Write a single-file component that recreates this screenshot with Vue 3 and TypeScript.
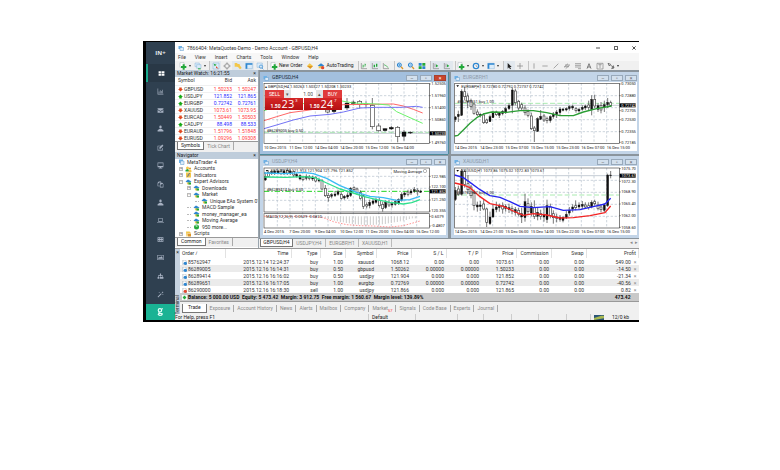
<script setup lang="ts">
type Candle = [number, number, number, number, number, number]
type Line = { color: string; width: number; points: string }
type Chart = {
  id: string
  title: string
  active: boolean
  x: number
  y: number
  left: number
  top: number
  bottom: number
  caption: string
  order: string
  orderY: number
  level: number
  priceY: number
  tag: string
  labels: [number, string][]
  times: string[]
  candles: Candle[]
  lines: Line[]
}

const navIcons: string[] = [
  'M1 2h4v3H1zM6 2h5v3H6zM1 6h4v4H1zM6 6h5v4H6z',
  'M1 1h1v9h9v1H1zM3 6h1v3H3zM5 4h1v5H5zM7 5h1v4H7zM9 3h1v6H9z',
  'M1 2h10v2L6 7 1 4zM1 5l5 3 5-3v5H1z',
  'M4 3a2 2 0 1 1 4 0v1a2 2 0 1 1-4 0zM1 11V9l3-2h4l3 2v2z',
  'M1 3h6v1H2v6h7V7h1v4H1zM9 1l2 2-5 5H4V6z',
  'M1 1h10v8H7v1h2v1H3v-1h2V9H1zM2 2v5h8V2z',
  'M1 3l2-2h4v2h2l2 2v6H5V9H1zM2 4v4h3V5l1-2V2H4v2zM6 6v4h4V5H8v1z',
  'M4 3a2 2 0 1 1 4 0v1a2 2 0 1 1-4 0zM1 11V9l3-2h4l3 2v2z',
  'M2 2h8v6H2zM3 3v4h6V3zM0 9h12v1H0z',
  'M1 2h10v8H1zM2 4v1h2V4zM5 4v1h2V4zM8 4v1h2V4zM2 7v1h2V7zM5 7v1h2V7zM8 7v1h2V7z',
  'M0 2h12v8H0zM1 3v6h10V3zM2 8V7l2-2 1 1 3-2 2 3v1z',
  'M5 1h2v3h3v3h1v3H8V7h1V5H7v2h1v3H5V7h1V5H3v2h1v3H1V7h1V4h3z',
  'M1 10l6-6 1 1-6 6zM8 3l2-2 1 1-2 2zM3 2h2v1H3zM9 6h2v1H9z',
]

const menus = ['File', 'View', 'Insert', 'Charts', 'Tools', 'Window', 'Help']

type Tool = { name: string; icon: string; drop?: boolean; on?: boolean; text?: string }
const toolGroups: Tool[][] = [
  [{ name: 'New chart', icon: 'plus', drop: true }, { name: 'Profiles', icon: 'stack', drop: true }],
  [
    { name: 'Market Watch', icon: 'watch', on: true },
    { name: 'Data Window', icon: 'target' },
    { name: 'Navigator', icon: 'folder', on: true },
    { name: 'Terminal', icon: 'panel', on: true },
    { name: 'Strategy Tester', icon: 'tester' },
  ],
  [
    { name: 'New Order', icon: 'plus', text: 'New Order' },
    { name: 'MetaEditor', icon: 'gem' },
    { name: 'AutoTrading', icon: 'robot', text: 'AutoTrading' },
  ],
  [
    { name: 'Bar Chart', icon: 'bars' },
    { name: 'Candlesticks', icon: 'sticks', on: true },
    { name: 'Line Chart', icon: 'linechart' },
  ],
  [
    { name: 'Zoom In', icon: 'zoomin' },
    { name: 'Zoom Out', icon: 'zoomout' },
    { name: 'Tile Windows', icon: 'tiles' },
  ],
  [
    { name: 'Auto Scroll', icon: 'scroll', on: true },
    { name: 'Chart Shift', icon: 'scroll', on: true },
  ],
  [
    { name: 'Indicators', icon: 'plus', drop: true },
    { name: 'Periods', icon: 'clock', drop: true },
    { name: 'Templates', icon: 'panel', drop: true },
  ],
  [
    { name: 'Cursor', icon: 'cursor', on: true },
    { name: 'Crosshair', icon: 'cross' },
  ],
  [
    { name: 'Vertical Line', icon: 'vline' },
    { name: 'Horizontal Line', icon: 'hline' },
    { name: 'Trendline', icon: 'slash' },
    { name: 'Channel', icon: 'channel' },
    { name: 'Fibonacci', icon: 'fibo' },
    { name: 'Text', icon: 'letter' },
    { name: 'Text Label', icon: 'label' },
    { name: 'Arrows', icon: 'arrows', drop: true },
  ],
]

const quotes: [string, string, string, boolean][] = [
  ['GBPUSD', '1.50233', '1.50247', false],
  ['USDJPY', '121.852', '121.865', true],
  ['EURGBP', '0.72742', '0.72761', true],
  ['XAUUSD', '1073.61', '1073.95', false],
  ['EURCAD', '1.50449', '1.50503', false],
  ['CADJPY', '88.498', '88.533', true],
  ['EURAUD', '1.51796', '1.51848', false],
  ['EURUSD', '1.09296', '1.09308', false],
]

const tree: { text: string; depth: number; kind: string; box: string }[] = [
  { text: 'MetaTrader 4', depth: 0, kind: 'root', box: '' },
  { text: 'Accounts', depth: 1, kind: 'people', box: '+' },
  { text: 'Indicators', depth: 1, kind: 'func', box: '+' },
  { text: 'Expert Advisors', depth: 1, kind: 'hat', box: '−' },
  { text: 'Downloads', depth: 2, kind: 'hat', box: '+' },
  { text: 'Market', depth: 2, kind: 'hat', box: '−' },
  { text: 'Unique EAs System 01', depth: 3, kind: 'hat', box: '' },
  { text: 'MACD Sample', depth: 2, kind: 'hat', box: '' },
  { text: 'money_manager_ea', depth: 2, kind: 'hat', box: '' },
  { text: 'Moving Average', depth: 2, kind: 'hat', box: '' },
  { text: '950 more...', depth: 2, kind: 'globe', box: '' },
  { text: 'Scripts', depth: 1, kind: 'script', box: '+' },
]

const charts: Chart[] = [
  {
    id: 'gbpusd', title: 'GBPUSD,H4', active: true, x: 9, y: 6, left: 12, top: 10, bottom: 190,
    caption: '', order: '#86289005 buy 0.50', orderY: 155, level: 157, priceY: 160, tag: '1.50233',
    labels: [[12, '1.52505'], [47, '1.51960'], [83, '1.51400'], [119, '1.50860'], [187, '1.49760']],
    times: ['10 Dec 2015', '11 Dec 12:00', '14 Dec 04:00', '14 Dec 20:00', '15 Dec 12:00', '16 Dec 04:00'],
    candles: [
      [203, 84, 100, 90, 96, 0], [222, 84, 100, 89, 95, 1], [261, 54, 90, 69, 84, 1], [280, 62, 76, 66, 71, 1],
      [299, 60, 86, 64, 73, 0], [318, 64, 84, 72, 74, 1], [337, 54, 148, 76, 140, 0], [356, 130, 155, 138, 152, 0],
      [375, 144, 154, 146, 152, 1], [394, 138, 150, 142, 147, 1], [413, 138, 187, 142, 170, 0],
      [432, 150, 182, 156, 169, 1], [451, 154, 162, 157, 159, 1],
    ],
    lines: [
      { color: '#f66', width: 3, points: '12,122 50,110 90,98 135,92 250,74 400,72 430,78 460,88 488,99' },
      { color: '#6cf26c', width: 3, points: '12,92 60,76 240,62 280,69 350,72 385,75 410,95 450,113 488,130' },
      { color: '#7373f5', width: 3, points: '12,146 60,132 100,120 150,108 210,103 250,96 300,84 350,82 420,82 470,79 488,82' },
    ],
  },
  {
    id: 'eurgbp', title: 'EURGBP,H1', active: false, x: 12, y: 6, left: 14, top: 10, bottom: 190,
    caption: 'EURGBP,H1  0.72780 0.72792 0.72737 0.72742', order: '#86289651 buy 1.00', orderY: 68, level: 70, priceY: 76, tag: '0.72742',
    labels: [[12, '0.73050'], [47, '0.72880'], [92, '0.72705'], [119, '0.72530'], [155, '0.72355'], [187, '0.72185']],
    times: ['14 Dec 2015', '14 Dec 23:00', '15 Dec 07:00', '15 Dec 15:00', '15 Dec 23:00', '16 Dec 07:00', '16 Dec 15:00'],
    candles: [
      [16, 108, 126, 111, 119, 1], [25, 92, 126, 103, 110, 1], [35, 28, 108, 34, 106, 1], [44, 20, 60, 35, 50, 0],
      [53, 40, 84, 48, 64, 0], [63, 56, 90, 62, 80, 0], [72, 68, 104, 72, 100, 0], [82, 88, 108, 96, 104, 0],
      [91, 100, 112, 103, 107, 1], [101, 100, 132, 105, 128, 0], [110, 116, 132, 120, 128, 0], [120, 104, 126, 110, 125, 1],
      [129, 92, 114, 98, 113, 1], [139, 92, 108, 96, 104, 0], [148, 96, 114, 98, 106, 1], [158, 90, 106, 94, 101, 1],
      [167, 80, 102, 86, 96, 1], [177, 70, 90, 77, 86, 1], [187, 22, 100, 30, 76, 1], [196, 26, 76, 33, 68, 0],
      [206, 60, 92, 64, 84, 0], [215, 68, 92, 74, 84, 0], [225, 76, 106, 84, 98, 0], [234, 88, 112, 94, 106, 0],
      [244, 98, 150, 108, 146, 0], [253, 138, 186, 144, 152, 0], [263, 112, 156, 116, 154, 1], [272, 90, 120, 109, 118, 1],
      [282, 102, 126, 108, 120, 0], [291, 110, 130, 116, 122, 0], [301, 106, 128, 110, 122, 1], [310, 96, 116, 102, 110, 1],
      [320, 90, 114, 96, 104, 1], [330, 82, 108, 87, 98, 1], [339, 84, 94, 87, 91, 1], [349, 82, 94, 86, 90, 1],
      [358, 76, 92, 80, 86, 1], [368, 74, 90, 79, 84, 1], [378, 82, 98, 86, 92, 0], [387, 84, 98, 88, 93, 1],
      [397, 76, 92, 82, 88, 1], [406, 74, 90, 78, 84, 1], [416, 62, 90, 75, 82, 0], [425, 46, 106, 58, 88, 1],
      [434, 44, 84, 58, 78, 0], [444, 70, 96, 77, 88, 1], [453, 66, 100, 76, 90, 0], [463, 62, 96, 74, 82, 1],
      [473, 54, 84, 67, 74, 1], [482, 62, 80, 68, 76, 0],
    ],
    lines: [
      { color: '#2a9d34', width: 4, points: '14,168 24,166 40,150 60,130 80,113 100,102 125,96 170,97 210,92 250,92 290,98 330,107 370,107 400,96 440,86 485,78' },
    ],
  },
  {
    id: 'usdjpy', title: 'USDJPY,H4', active: false, x: 9, y: 33, left: 12, top: 39, bottom: 171,
    caption: 'USDJPY,H4  121.913 121.904 121.796 121.852', order: '#86289414 buy 0.50', orderY: 107, level: 109, priceY: 109, tag: '121.852',
    labels: [[64, '122.985'], [96, '122.100'], [135, '121.250'], [168, '120.355'], [184, '0.6079'], [213, '-0.4807']],
    times: ['4 Dec 2015', '7 Dec 20:00', '9 Dec 04:00', '10 Dec 12:00', '11 Dec 20:00', '15 Dec 04:00', '16 Dec 12:00'],
    candles: [
      [16, 52, 78, 64, 75, 1], [25, 46, 66, 52, 64, 0], [35, 44, 60, 50, 56, 1], [44, 44, 60, 48, 54, 1],
      [54, 44, 58, 48, 54, 1], [63, 42, 60, 49, 55, 0], [72, 44, 60, 48, 54, 1], [82, 40, 60, 46, 54, 0],
      [91, 44, 60, 48, 54, 1], [101, 46, 66, 50, 60, 0], [110, 54, 68, 58, 64, 1], [120, 58, 76, 62, 72, 1],
      [129, 62, 78, 66, 74, 0], [139, 58, 76, 64, 70, 1], [148, 60, 76, 66, 70, 0], [158, 62, 78, 66, 72, 1],
      [167, 64, 82, 68, 78, 0], [177, 68, 82, 73, 78, 1], [186, 72, 106, 77, 102, 0], [196, 90, 126, 100, 122, 0],
      [205, 114, 140, 121, 128, 0], [215, 114, 130, 119, 124, 1], [225, 108, 126, 117, 122, 1], [234, 104, 122, 110, 118, 1],
      [244, 112, 134, 118, 130, 0], [253, 120, 134, 124, 129, 1], [263, 112, 132, 120, 126, 1], [272, 96, 126, 100, 122, 1],
      [282, 94, 108, 98, 104, 0], [291, 98, 120, 102, 112, 0], [301, 106, 134, 112, 130, 0], [310, 118, 162, 122, 154, 0],
      [320, 142, 160, 149, 153, 0], [329, 134, 160, 142, 152, 1], [339, 132, 150, 138, 145, 1], [348, 128, 146, 134, 142, 1],
      [358, 128, 158, 137, 152, 0], [368, 140, 170, 148, 161, 0], [377, 136, 162, 142, 158, 1], [387, 136, 156, 142, 150, 0],
      [396, 140, 158, 146, 150, 1], [406, 134, 152, 140, 148, 1], [416, 130, 150, 134, 146, 1], [425, 112, 140, 118, 136, 1],
      [434, 110, 126, 114, 120, 1], [444, 104, 124, 111, 118, 0], [453, 102, 120, 108, 114, 1], [463, 96, 114, 104, 109, 1],
      [473, 100, 122, 106, 110, 0], [482, 104, 114, 108, 112, 1],
    ],
    lines: [
      { color: '#3bbcf5', width: 4, points: '12,54 80,56 130,52 160,56 200,70 240,92 290,112 330,124 370,128 410,136 450,134 480,124' },
      { color: '#2fe08d', width: 4, points: '12,66 80,67 130,65 165,68 200,84 240,102 280,114 310,124 350,134 390,142 430,147 455,143 480,134' },
    ],
  },
  {
    id: 'xauusd', title: 'XAUUSD,H1', active: false, x: 12, y: 33, left: 14, top: 39, bottom: 219,
    caption: 'XAUUSD,H1  1073.86 1075.02 1072.83 1073.61', order: '#85762947 buy 1.00', orderY: 117, level: 120, priceY: 62, tag: '1073.61',
    labels: [[41, '1075.70'], [79, '1072.30'], [111, '1068.90'], [147, '1065.40'], [182, '1062.00'], [217, '1058.60']],
    times: ['14 Dec 2015', '14 Dec 21:00', '15 Dec 06:00', '15 Dec 14:00', '15 Dec 22:00', '16 Dec 07:00', '16 Dec 15:00'],
    candles: [
      [16, 96, 138, 106, 134, 1], [25, 92, 122, 102, 118, 0], [35, 42, 122, 48, 118, 1], [44, 44, 98, 50, 88, 0],
      [54, 60, 112, 86, 104, 0], [63, 90, 130, 96, 122, 0], [72, 104, 166, 112, 152, 0], [82, 140, 170, 150, 156, 1],
      [91, 138, 168, 150, 155, 1], [101, 132, 166, 147, 162, 0], [110, 158, 216, 162, 202, 0], [120, 170, 210, 186, 206, 1],
      [129, 148, 188, 162, 186, 1], [139, 140, 172, 156, 164, 1], [148, 146, 170, 154, 158, 1], [158, 142, 176, 152, 162, 0],
      [167, 148, 170, 154, 160, 1], [177, 146, 174, 158, 164, 1], [186, 152, 178, 160, 168, 0], [196, 156, 182, 164, 172, 1],
      [206, 158, 184, 166, 178, 0], [215, 158, 204, 176, 186, 1], [225, 116, 200, 140, 188, 1], [234, 130, 180, 146, 170, 0],
      [244, 142, 184, 154, 174, 1], [253, 136, 192, 158, 184, 0], [263, 158, 196, 172, 184, 1], [272, 164, 194, 176, 184, 0],
      [282, 158, 200, 178, 186, 1], [291, 134, 204, 152, 194, 1], [301, 146, 190, 156, 182, 0], [310, 166, 206, 176, 188, 0],
      [320, 176, 202, 186, 190, 0], [330, 180, 200, 188, 193, 1], [339, 184, 202, 188, 196, 1], [349, 168, 192, 178, 188, 1],
      [358, 156, 182, 166, 174, 1], [368, 148, 172, 156, 162, 1], [377, 136, 166, 152, 158, 0], [387, 142, 164, 150, 156, 1],
      [397, 138, 162, 148, 154, 1], [406, 142, 162, 150, 156, 0], [416, 142, 164, 152, 158, 0], [425, 136, 160, 142, 156, 1],
      [434, 134, 152, 140, 146, 0], [444, 140, 166, 150, 160, 0], [453, 148, 172, 156, 164, 0], [463, 144, 172, 150, 166, 1],
      [473, 56, 156, 60, 152, 1], [482, 48, 70, 60, 62, 1],
    ],
    lines: [
      { color: '#2424f0', width: 4, points: '14,60 40,68 60,82 90,104 120,122 150,127 180,140 210,154 250,158 300,155 340,166 390,164 430,155 465,147 482,130' },
      { color: '#f32424', width: 4, points: '14,84 40,90 60,98 90,125 120,146 160,154 190,168 220,181 250,176 290,180 330,189 370,188 420,182 465,173 482,153' },
    ],
  },
]
const tabOrder = [charts[0], charts[2], charts[1], charts[3]]

const columnX = Array.from({ length: 12 }, (_, i) => 52 + i * 38)
const rowY = (c: Chart): number[] => {
  const first = c.y === 6 ? 47 : c.id === 'usdjpy' ? 64 : 76
  return [0, 1, 2, 3].map((i) => first + i * 36).filter((y) => y < c.bottom - 4)
}
const macd = Array.from({ length: 32 }, (_, i) => {
  const x = 187 + i * 9
  return { x, y: 184 + Math.round(4 + 22 * Math.sin((Math.min(i, 30) / 31) * Math.PI)) }
})

const columns = ['Order  ∕', 'Time', 'Type', 'Size', 'Symbol', 'Price', 'S / L', 'T / P', 'Price', 'Commission', 'Swap', 'Profit']
const orders: string[][] = [
  ['85762947', '2015.12.14 12:24:37', 'buy', '1.00', 'xauusd', '1068.12', '0.00', '0.00', '1073.61', '0.00', '0.00', '549.00'],
  ['86289005', '2015.12.16 16:14:31', 'buy', '0.50', 'gbpusd', '1.50262', '0.00000', '0.00000', '1.50233', '0.00', '0.00', '-14.50'],
  ['86289414', '2015.12.16 16:16:02', 'buy', '0.50', 'usdjpy', '121.904', '0.000', '0.000', '121.852', '0.00', '0.00', '-21.34'],
  ['86289651', '2015.12.16 16:17:05', 'buy', '1.00', 'eurgbp', '0.72769', '0.00000', '0.00000', '0.72742', '0.00', '0.00', '-40.56'],
  ['86290000', '2015.12.16 16:18:30', 'sell', '1.00', 'usdjpy', '121.866', '0.000', '0.000', '121.865', '0.00', '0.00', '0.82'],
]
const terminalTabs = ['Trade', 'Exposure', 'Account History', 'News', 'Alerts', 'Mailbox', 'Company', 'Market', 'Signals', 'Code Base', 'Experts', 'Journal']
</script>

<template>
  <main class="page">
    <div class="frame">
      <nav class="rail" aria-label="Sections">
        <strong class="brand">IN+</strong>
        <a v-for="(d, i) in navIcons" :key="i" href="#" class="rail-link" :class="{ current: i === 0 }">
          <svg viewBox="0 0 12 12" class="rail-icon"><path :d="d" fill-rule="evenodd" /></svg>
        </a>
        <a href="#" class="rail-foot">
          <svg viewBox="0 0 12 14" class="foot-icon">
            <circle cx="5" cy="4" r="3" /><path d="M8 2l2-1M4 7L3 9l6 1c1 3-6 4-7 1l2-2" />
          </svg>
        </a>
      </nav>

      <section class="terminal-app">
        <header class="titlebar">
          <svg viewBox="0 0 12 12" class="app-icon"><path d="M1 2h7v6H1z" class="i-sky" /><path d="M4 5h7v6H4z" class="i-pale" /></svg>
          <h1>7866404: MetaQuotes-Demo - Demo Account - GBPUSD,H4</h1>
          <div class="win-buttons">
            <button aria-label="Minimize"><svg viewBox="0 0 10 10"><path d="M0 5h10" /></svg></button>
            <button aria-label="Maximize"><svg viewBox="0 0 10 10"><path d="M1 1h8v8H1z" /></svg></button>
            <button aria-label="Close"><svg viewBox="0 0 10 10"><path d="M1 1l8 8M9 1l-8 8" /></svg></button>
          </div>
        </header>

        <div class="menubar">
          <button v-for="m in menus" :key="m">{{ m }}</button>
        </div>

        <div class="toolbar">
          <div v-for="(g, gi) in toolGroups" :key="gi" class="tool-group">
            <button v-for="t in g" :key="t.name" class="tool" :class="{ on: t.on, wide: t.drop, text: t.text }" :aria-label="t.name">
              <svg viewBox="0 0 24 24" class="tool-icon">
                <g v-if="t.icon === 'plus'"><path d="M3 2h12v14H3z" class="i-doc" /><path d="M11 7h6v5h5v6h-5v5h-6v-5H6v-6h5z" class="i-green" /></g>
                <g v-else-if="t.icon === 'stack'"><path d="M3 3h13v11H3z" class="i-pale" /><path d="M8 8h13v11H8z" class="i-pale" /><path d="M12 19h8v3h-8z" class="i-green" /></g>
                <g v-else-if="t.icon === 'watch'"><path d="M3 3h18v18H3z" class="i-pale" /><path d="M5 5l9 3-6 5z" class="i-green" /><path d="M12 12l8 8-8-2z" class="i-red" /></g>
                <g v-else-if="t.icon === 'target'"><circle cx="12" cy="12" r="7" class="s-grey" /><path d="M12 1v7M12 16v7M1 12h7M16 12h7" class="s-grey" /></g>
                <g v-else-if="t.icon === 'folder'"><path d="M2 3h7l2 3h6v8H2z" class="i-gold" /><path d="M9 12l8-3 6 9-5 4z" class="i-gold" /></g>
                <g v-else-if="t.icon === 'panel'"><path d="M2 4h20v16H2z" class="i-pale" /><path d="M2 4h20v4H2zM2 8h5v12H2z" class="i-blue" /></g>
                <g v-else-if="t.icon === 'tester'"><path d="M3 3h16v13H3z" class="i-pale" /><circle cx="15" cy="14" r="5" class="s-blue" /><path d="M18 18l4 4" class="s-blue" /></g>
                <g v-else-if="t.icon === 'gem'"><path d="M3 12l8-8 10 8-8 8z" class="i-gold" /><path d="M3 12h18l-8 8z" class="i-amber" /></g>
                <g v-else-if="t.icon === 'robot'"><path d="M2 11l10-7 10 7-10 4z" class="i-blue" /><path d="M5 13h13v6H5z" class="i-gold" /><circle cx="17" cy="17" r="5" class="i-red" /></g>
                <g v-else-if="t.icon === 'bars'"><path d="M4 3v17h17" class="s-grey" /><path d="M9 8v9M15 5v9M9 12h3M15 8h3" class="s-green" /></g>
                <g v-else-if="t.icon === 'sticks'"><path d="M4 3v17h17" class="s-grey" /><path d="M8 8h4v8H8zM15 5h4v9h-4z" class="i-green" /></g>
                <g v-else-if="t.icon === 'linechart'"><path d="M4 3v17h17" class="s-grey" /><path d="M6 8l6 3 7 6" class="s-green" /></g>
                <g v-else-if="t.icon === 'zoomin' || t.icon === 'zoomout'"><circle cx="10" cy="9" r="6" class="i-glass" /><path d="M15 14l6 7" class="s-gold" /><path v-if="t.icon === 'zoomin'" d="M7 9h6M10 6v6" class="s-blue" /><path v-else d="M7 9h6" class="s-blue" /></g>
                <g v-else-if="t.icon === 'tiles'"><path d="M2 3h9v8H2zM13 13h9v8h-9z" class="i-blue" /><path d="M13 3h9v8h-9zM2 13h9v8H2z" class="i-green" /></g>
                <g v-else-if="t.icon === 'scroll'"><path d="M4 3v17h17M9 5v11" class="s-grey" /><path d="M12 7l7 5-7 4z" class="i-green" /></g>
                <g v-else-if="t.icon === 'clock'"><circle cx="12" cy="12" r="10" class="i-blue" /><circle cx="12" cy="12" r="6" class="i-white" /><path d="M12 8v5h4" class="s-grey" /></g>
                <path v-else-if="t.icon === 'cursor'" d="M8 3v17l4-4 3 6 3-2-3-5h5z" class="i-dark" />
                <path v-else-if="t.icon === 'cross'" d="M12 3v18M3 12h18" class="s-grey" />
                <path v-else-if="t.icon === 'vline'" d="M12 4v16" class="s-grey" />
                <path v-else-if="t.icon === 'hline'" d="M4 12h16" class="s-grey" />
                <path v-else-if="t.icon === 'slash'" d="M5 19L19 5" class="s-grey" />
                <path v-else-if="t.icon === 'channel'" d="M3 16L15 5M8 20L20 9M6 9h14M4 14h14" class="s-grey" />
                <path v-else-if="t.icon === 'fibo'" d="M3 5h18M3 10h18M3 15h18M12 20h9" class="s-grey" />
                <path v-else-if="t.icon === 'letter'" d="M6 20L12 5l6 15M8 15h8" class="s-dark" />
                <path v-else-if="t.icon === 'label'" d="M3 4h18v17H3zM7 8h10M12 8v10" class="s-grey" />
                <path v-else d="M3 4l8 3-4 5zM11 9l9 9M14 20l7-2-2-7z" class="s-dark" />
              </svg>
              <span v-if="t.text">{{ t.text }}</span>
              <i v-if="t.drop" class="caret"></i>
            </button>
          </div>
        </div>

        <div class="workspace">
          <aside class="docks">
            <section class="dock">
              <h2 class="dock-title"><span>Market Watch: 16:21:55</span><button aria-label="Close Market Watch">×</button></h2>
              <table class="quotes">
                <thead><tr><th>Symbol</th><th>Bid</th><th>Ask</th></tr></thead>
                <tbody>
                  <tr v-for="q in quotes" :key="q[0]" :class="q[3] ? 'up' : 'down'">
                    <td><svg viewBox="0 0 12 12" class="dir"><path v-if="q[3]" d="M6 1l6 6H9v4H3V7H0z" /><path v-else d="M6 11L0 5h3V1h6v4h3z" /></svg>{{ q[0] }}</td>
                    <td>{{ q[1] }}</td>
                    <td>{{ q[2] }}</td>
                  </tr>
                </tbody>
              </table>
              <div class="dock-tabs"><button class="active">Symbols</button><button>Tick Chart</button></div>
            </section>
            <section class="dock nav-dock">
              <h2 class="dock-title"><span>Navigator</span><button aria-label="Close Navigator">×</button></h2>
              <ul class="tree">
                <li v-for="n in tree" :key="n.text" :class="'d' + n.depth">
                  <i v-if="n.depth" class="box" :class="{ leaf: !n.box }">{{ n.box }}</i>
                  <svg viewBox="0 0 12 12" class="node" aria-hidden="true">
                    <g v-if="n.kind === 'root'"><path d="M1 1h8v7H1z" class="i-sky" /><path d="M4 4h7v7H4z" class="i-pale" /></g>
                    <g v-else-if="n.kind === 'people'"><circle cx="4" cy="4" r="3" class="i-gold" /><path d="M0 11V8l4-2 3 2v3z" class="i-green" /><circle cx="9" cy="5" r="2" class="i-amber" /><path d="M6 12V9l3-2 3 2v3z" class="i-gold" /></g>
                    <g v-else-if="n.kind === 'func'"><path d="M1 1h10v10H1z" class="i-gold" /><path d="M4 10L7 3h2M4 6h4" class="s-grey" /></g>
                    <g v-else-if="n.kind === 'globe'"><circle cx="6" cy="6" r="5" class="i-green" /><path d="M3 3h5v2H5z" class="i-white" /></g>
                    <g v-else-if="n.kind === 'script'"><path d="M1 1h7l3 3H4v7H2z" class="i-gold" /><path d="M4 5h7v6H5z" class="i-amber" /></g>
                    <g v-else><path d="M0 5l5-4 7 4-6 3z" class="i-blue" /><path d="M2 7h8v4H4z" class="i-gold" /><path d="M6 7h5v4H6z" class="i-green" /></g>
                  </svg>
                  <span>{{ n.text }}</span>
                </li>
              </ul>
              <div class="dock-tabs"><button class="active">Common</button><button>Favorites</button></div>
            </section>
          </aside>

          <section class="mdi">
            <div class="windows">
              <article v-for="c in charts" :key="c.id" class="chart-window" :class="{ active: c.active }">
                <header class="chart-title">
                  <svg viewBox="0 0 12 12" class="app-icon"><path d="M1 2h7v6H1z" class="i-sky" /><path d="M4 5h7v6H4z" class="i-pale" /></svg>
                  <h3>{{ c.title }}</h3>
                  <span class="chart-buttons">
                    <button aria-label="Minimize chart">–</button><button aria-label="Maximize chart">▫</button><button class="shut" aria-label="Close chart">×</button>
                  </span>
                </header>
                <div class="chart-body">
                  <svg class="plot" :viewBox="`${c.x} ${c.y} 549 207`">
                    <rect :x="c.x" :y="c.y" width="549" height="207" class="paper" />
                    <line v-for="x in columnX" :key="'v' + x" :x1="x" :x2="x" :y1="c.top" :y2="c.y === 6 ? 190 : 219" class="grid" />
                    <line v-for="y in rowY(c)" :key="'h' + y" :x1="c.left" x2="508" :y1="y" :y2="y" class="grid" />
                    <line :x1="c.left" x2="508" :y1="c.level" :y2="c.level" class="level" :class="{ strong: c.id === 'usdjpy' }" />
                    <line v-if="c.id !== 'usdjpy'" :x1="c.left" x2="508" :y1="c.priceY" :y2="c.priceY" class="price" />
                    <g v-for="k in c.candles" :key="k[0]">
                      <line :x1="k[0]" :x2="k[0]" :y1="k[1]" :y2="k[2]" class="wick" />
                      <rect :x="k[0] - (c.active ? 6 : 3)" :y="k[3]" :width="c.active ? 12 : 6" :height="k[4] - k[3]" :class="k[5] ? 'full' : 'hollow'" />
                    </g>
                    <polyline v-for="l in c.lines" :key="l.color" :points="l.points" :stroke="l.color" :stroke-width="l.width" class="curve" />
                    <g v-if="c.id === 'usdjpy'">
                      <rect x="12" y="176" width="496" height="43" class="box-line" />
                      <line v-for="b in macd" :key="b.x" :x1="b.x" :x2="b.x" y1="184" :y2="b.y" class="hist" />
                      <polyline points="12,184 150,184 190,188 220,200 260,209 300,212 340,213 390,216 430,212 480,198" class="signal" />
                      <text x="18" y="190" class="small">MACD(12,26,9) -0.0529 -0.0810</text>
                      <text x="486" y="53" text-anchor="end" class="small">Moving Average</text>
                      <circle cx="495" cy="48" r="5" class="smile" />
                    </g>
                    <rect :x="c.left" :y="c.top" :width="508 - c.left" :height="c.bottom - c.top" class="box-line" />
                    <text :x="c.left + 8" :y="c.orderY" class="small">{{ c.order }}</text>
                    <path v-if="c.caption" :d="`M${c.left + 5} ${c.top + 6}h8l-4 5z`" />
                    <text v-if="c.caption" :x="c.left + 20" :y="c.top + 13" class="small">{{ c.caption }}</text>
                    <g v-for="a in c.labels" :key="a[1]">
                      <line x1="508" x2="512" :y1="a[0]" :y2="a[0]" class="wick" />
                      <text x="514" :y="a[0] + 4" class="small">{{ a[1] }}</text>
                    </g>
                    <rect x="509" :y="c.priceY - 6" width="48" height="12" />
                    <text x="514" :y="c.priceY + 4" class="small tag">{{ c.tag }}</text>
                    <text v-for="(t, i) in c.times" :key="t" :x="c.left + i * 76" :y="c.y === 6 ? 206 : 235" class="small">{{ t }}</text>
                  </svg>
                  <div v-if="c.active" class="one-click">
                    <p>▴ GBPUSD,H4 1.50263 1.50327 1.50208 1.50233</p>
                    <div class="deal-top">
                      <button class="deal">SELL</button>
                      <button class="step" aria-label="Less volume">▾</button>
                      <input aria-label="Volume" value="1.00" />
                      <button class="step" aria-label="More volume">▴</button>
                      <button class="deal">BUY</button>
                    </div>
                    <div class="deal-prices">
                      <button class="quote"><small>1.50</small><b>23</b><sup>3</sup></button>
                      <button class="quote"><small>1.50</small><b>24</b><sup>7</sup></button>
                    </div>
                  </div>
                </div>
              </article>
            </div>
            <div class="chart-tabs">
              <button v-for="c in tabOrder" :key="c.id" :class="{ active: c.active }">{{ c.title }}</button>
              <span class="tab-arrows">◂&nbsp; ▸</span>
            </div>
          </section>
        </div>

        <section class="terminal">
          <div class="grip"><span class="grip-x">×</span><span class="grip-name">Terminal</span></div>
          <div class="terminal-main">
            <table class="orders">
              <colgroup>
                <col class="c-order" /><col class="c-time" /><col class="c-type" /><col class="c-size" /><col class="c-symbol" />
                <col v-for="n in 6" :key="n" class="c-num" /><col />
              </colgroup>
              <thead><tr><th v-for="(h, i) in columns" :key="i">{{ h }}</th></tr></thead>
              <tbody>
                <tr v-for="o in orders" :key="o[0]">
                  <td v-for="(v, i) in o" :key="i">
                    <svg v-if="i === 0" viewBox="0 0 12 12" class="dir"><path d="M2 0h6l3 3v9H2z" class="i-doc" /><circle cx="8" cy="8" r="4" :class="o[2] === 'buy' ? 'i-blue' : 'i-red'" /></svg>{{ v }}<span v-if="i === 11" class="row-x">×</span>
                  </td>
                </tr>
              </tbody>
              <tfoot>
                <tr>
                  <td colspan="11"><svg viewBox="0 0 12 12" class="dir"><path d="M0 0h12v12H0z" class="i-white" /><path d="M4 2h4v2h2v4H8v2H4V8H2V4h2z" class="i-green" /></svg>Balance: 5 000.00 USD&nbsp; Equity: 5 473.42&nbsp; Margin: 3 912.75&nbsp; Free margin: 1 560.67&nbsp; Margin level: 139.89%</td>
                  <td>473.42</td>
                </tr>
              </tfoot>
            </table>
            <div class="terminal-tabs">
              <button v-for="(t, i) in terminalTabs" :key="t" :class="{ active: i === 0 }">{{ t }}<sub v-if="t === 'Market'">57</sub></button>
            </div>
          </div>
        </section>

        <footer class="status">
          <span>For Help, press F1</span>
          <span>Default</span>
          <span></span><span></span><span></span><span></span><span></span><span></span>
          <span class="net"><svg viewBox="0 0 30 15" class="net-icon"><path d="M0 0h30v15H0z" class="i-navy" /><path d="M0 15V9L22 2h8v8z" class="i-olive" /></svg>12/0 kb</span>
        </footer>
      </section>
    </div>
  </main>
</template>

<style>
body {
  margin: 0;
  background: #fff;
}
</style>

<style scoped>
* {
  box-sizing: border-box;
}
.page {
  padding: 41px 141px 0 143px;
  font: 5px/7px Roboto, "Open Sans", sans-serif;
  color: #333;
}
button, input {
  font: inherit;
  color: inherit;
  border: 0;
  padding: 0;
  margin: 0;
  background: none;
  border-radius: 0;
}
h1, h2, h3, p, ul {
  margin: 0;
  padding: 0;
  font: inherit;
}
svg {
  display: block;
  flex: none;
}
table {
  width: 100%;
  border-collapse: collapse;
  table-layout: fixed;
}
th, td {
  padding: 0 2px 0 0;
  font-weight: 400;
  text-align: right;
  white-space: nowrap;
  overflow: hidden;
}
.frame {
  display: flex;
  border: solid #000;
  border-width: 1px 0 2px 3px;
}

/* left rail */
.rail {
  width: 29px;
  flex: none;
  display: flex;
  flex-direction: column;
  background: #2f4050;
}
.brand {
  height: 22px;
  font: 700 6px/23px "Open Sans", sans-serif;
  color: #e8edf0;
  text-align: center;
}
.rail-link {
  flex: 1;
  display: flex;
  align-items: center;
  justify-content: center;
}
.rail-link.current {
  background: #293846;
  border-left: 2px solid #19aa8d;
}
.rail-icon {
  width: 7px;
  height: 7px;
  fill: #a7b1c2;
}
.current .rail-icon {
  fill: #fff;
}
.rail-foot {
  height: 16px;
  display: flex;
  align-items: center;
  justify-content: center;
  background: #1ab394;
}
.foot-icon {
  width: 7px;
  height: 8px;
  fill: none;
  stroke: #e6fff9;
  stroke-width: 2;
}

/* icon paints */
.i-sky { fill: #6db2e8; }
.i-pale { fill: #dcecf9; stroke: #5b98cf; }
.i-doc { fill: #fff; stroke: #7b8a99; }
.i-green { fill: #22a83a; }
.i-red { fill: #e2492f; }
.i-gold { fill: #f3c74a; }
.i-amber { fill: #dd9526; }
.i-blue { fill: #2e86d0; }
.i-glass { fill: #cfe8fb; stroke: #2e86d0; stroke-width: 3; }
.i-white { fill: #fff; }
.i-dark { fill: #222; }
.i-navy { fill: #2a5578; }
.i-olive { fill: #a9b950; }
.s-grey, .s-blue, .s-green, .s-gold, .s-dark {
  fill: none;
  stroke-width: 2;
}
.s-grey { stroke: #808080; }
.s-blue { stroke: #2e86d0; }
.s-green { stroke: #22a83a; }
.s-gold { stroke: #dd9526; stroke-width: 4; }
.s-dark { stroke: #444; }

/* window head */
.terminal-app {
  flex: 1;
  min-width: 0;
  display: flex;
  flex-direction: column;
  background: #f0f0f0;
}
.titlebar {
  height: 11px;
  display: flex;
  align-items: center;
  background: #fff;
  padding: 1px 3px 0;
}
.app-icon {
  width: 6px;
  height: 6px;
  margin-right: 3px;
}
.win-buttons {
  margin-left: auto;
  display: flex;
  gap: 14px;
}
.win-buttons svg {
  width: 4px;
  height: 4px;
  fill: none;
  stroke: #222;
  stroke-width: 2;
}
.menubar {
  height: 8px;
  display: flex;
  align-items: center;
  gap: 9px;
  padding: 0 3px;
  background: #f7f7f7;
}
.toolbar {
  height: 9px;
  display: flex;
  align-items: center;
  padding: 0 2px;
}
.tool-group {
  display: flex;
  padding-right: 2px;
}
.tool-group + .tool-group {
  border-left: 1px solid #c4c4c4;
}
.tool {
  width: 11px;
  height: 9px;
  display: flex;
  align-items: center;
  justify-content: center;
}
.tool.on {
  background: #e2e8ee;
}
.tool.wide {
  width: 15px;
  gap: 2px;
}
.tool.text {
  width: auto;
  padding: 0 2px;
  gap: 1px;
  color: #222;
}
.tool-icon {
  width: 8px;
  height: 8px;
}
.caret {
  border: solid transparent;
  border-width: 2px 1px 0;
  border-top-color: #333;
}

/* docks */
.workspace {
  display: flex;
}
.docks {
  width: 84px;
  flex: none;
  display: flex;
  flex-direction: column;
  background: #f0f0f0;
  border-right: 1px solid #9aa5ae;
}
.dock {
  background: #fff;
}
.dock-title {
  height: 7px;
  display: flex;
  justify-content: space-between;
  align-items: center;
  padding: 0 2px;
  background: #bfcddb;
  color: #222;
}
.dock-title button {
  height: 7px;
}
.quotes {
  table-layout: auto;
}
.quotes th:first-child, .quotes td:first-child {
  text-align: left;
  padding-left: 3px;
}
.quotes tr {
  height: 7px;
}
.quotes thead tr {
  height: 8px;
}
.quotes td {
  border-top: 1px solid #f0f0f0;
  line-height: 6px;
}
.quotes td + td, .quotes th + th {
  width: 24px;
}
.up td + td { color: #2a2aff; }
.down td + td { color: #ff3b3b; }
.dir {
  display: inline-block;
  width: 5px;
  height: 5px;
  margin-right: 1px;
  vertical-align: -1px;
}
.up .dir { fill: #16a916; }
.down .dir { fill: #e04a22; }
.dock-tabs {
  height: 10px;
  display: flex;
  align-items: flex-start;
  padding: 0 2px;
  border-top: 1px solid #999;
  background: #f0f0f0;
  color: #888;
}
.dock-tabs button {
  height: 8px;
  padding: 0 3px;
  border-right: 1px solid #aaa;
}
.dock-tabs .active {
  background: #fff;
  color: #222;
  border: solid #777;
  border-width: 0 1px 1px;
}
.nav-dock {
  margin-top: 1px;
  flex: 1;
}
.tree {
  height: 78px;
  display: grid;
  grid-template-rows: repeat(12, 1fr);
  list-style: none;
  padding-left: 3px;
  overflow: hidden;
}
.tree li {
  min-height: 0;
  display: flex;
  align-items: center;
  gap: 2px;
  white-space: nowrap;
}
.d1 { padding-left: 1px; }
.d2 { padding-left: 9px; }
.d3 { padding-left: 17px; }
.box {
  width: 4px;
  height: 4px;
  border: 1px solid #bbb;
  font: 4px/2px Roboto, sans-serif;
  text-align: center;
  color: #777;
}
.box.leaf {
  height: 1px;
  border-width: 1px 0 0;
  border-style: dotted;
}
.node {
  width: 7px;
  height: 6px;
}

/* chart windows */
.mdi {
  flex: 1;
  min-width: 0;
  display: flex;
  flex-direction: column;
}
.windows {
  display: grid;
  grid-template-columns: 1fr 1fr;
  gap: 2px 3px;
  padding: 2px 0 1px 1px;
  background: #8b959d;
}
.chart-window {
  min-width: 0;
  padding: 1px 2px 3px 3px;
  background: #c3d5e8;
}
.chart-window.active {
  background: #a3c0de;
  box-shadow: 0 1px #4e8c9c, 1px 0 #4e8c9c;
}
.chart-title {
  height: 9px;
  display: flex;
  align-items: center;
  color: #8d9aa8;
}
.active .chart-title {
  color: #1c2c3c;
}
.chart-buttons {
  margin-left: auto;
  display: flex;
  gap: 2px;
}
.chart-buttons button {
  width: 12px;
  height: 6px;
  border: 1px solid #98a9ba;
  background: #d3e0ed;
  line-height: 4px;
  color: #666;
}
.active .chart-buttons .shut {
  background: #c8452d;
  border-color: #a8402e;
  color: #fff;
}
.chart-body {
  position: relative;
}
.plot {
  width: 100%;
}
.paper { fill: #fff; }
.grid {
  stroke: #b3bfcb;
  stroke-width: 2;
  stroke-dasharray: 7 5;
}
.level {
  stroke: #7fe08a;
  stroke-width: 2;
  stroke-dasharray: 15 7;
}
.level.strong {
  stroke: #21d321;
  stroke-width: 3;
  stroke-dasharray: 16 6 4 6;
}
.price {
  stroke: #a9b4bf;
  stroke-width: 2;
}
.wick {
  stroke: #333;
  stroke-width: 2;
}
.full {
  fill: #111;
  stroke: #111;
}
.hollow {
  fill: #fff;
  stroke: #444;
  stroke-width: 2;
}
.curve {
  fill: none;
  stroke-linejoin: round;
}
.box-line {
  fill: none;
  stroke: #444;
  stroke-width: 2;
}
.hist {
  stroke: #ccc;
  stroke-width: 3;
}
.signal {
  fill: none;
  stroke: #f66;
  stroke-width: 2;
  stroke-dasharray: 5 4;
}
.smile {
  fill: #fff;
  stroke: #333;
}
.small {
  font: 12px Roboto, sans-serif;
  fill: #222;
}
.small.tag {
  fill: #fff;
}

/* one-click trading panel */
.one-click {
  position: absolute;
  top: 2px;
  left: 2px;
  width: 77px;
}
.one-click p {
  width: 88px;
  font-size: 4px;
  line-height: 6px;
  white-space: nowrap;
  color: #222;
}
.deal-top {
  display: flex;
  height: 8px;
  color: #555;
  background: #f3f3f3;
}
.deal {
  width: 19px;
  background: #e03b3b;
  color: #fff;
}
.step {
  width: 7px;
  background: #e4e4e4;
  line-height: 6px;
}
.deal-top input {
  flex: 1;
  min-width: 0;
  text-align: right;
  padding-right: 3px;
  background: #fff;
}
.deal-prices {
  display: flex;
  gap: 1px;
}
.quote {
  flex: 1;
  height: 12px;
  display: flex;
  justify-content: center;
  align-items: flex-end;
  background: linear-gradient(#d42626, #b50f12);
  color: #fff;
}
.quote small {
  font: 700 5px/8px Roboto, sans-serif;
}
.quote b {
  font: 11px/12px "Open Sans", sans-serif;
  margin: 0 1px;
}
.quote sup {
  font: 4px/6px Roboto, sans-serif;
  align-self: flex-start;
}
.chart-tabs {
  height: 9px;
  display: flex;
  align-items: flex-start;
  padding: 0 1px;
  background: #f0f0f0;
  color: #888;
}
.chart-tabs button {
  height: 8px;
  width: 33px;
  border-right: 1px solid #bbb;
}
.chart-tabs .active {
  color: #222;
  background: #fff;
  border: solid #777;
  border-width: 0 1px 1px;
}
.tab-arrows {
  margin-left: auto;
}

/* terminal */
.terminal {
  display: flex;
  border-top: 1px solid #999;
}
.grip {
  width: 5px;
  flex: none;
  display: flex;
  flex-direction: column;
  justify-content: space-between;
  background: #c6d3e0;
  color: #222;
}
.grip-x {
  text-align: center;
}
.grip-name {
  writing-mode: vertical-rl;
  transform: rotate(180deg);
  line-height: 5px;
}
.terminal-main {
  flex: 1;
  min-width: 0;
}
.orders {
  background: #fff;
}
.c-order { width: 45px; }
.c-time { width: 66px; }
.c-type { width: 29px; }
.c-size { width: 25px; }
.c-symbol { width: 31px; }
.c-num { width: 35px; }
.orders th:first-child, .orders td:first-child {
  text-align: left;
  padding-left: 2px;
}
.orders thead tr {
  height: 9px;
}
.orders th {
  border-right: 1px solid #e2e2e2;
}
.orders tbody tr {
  height: 7px;
}
.orders tbody td {
  line-height: 6px;
}
.orders tbody tr:nth-child(even) {
  background: #ebebeb;
}
.orders tfoot tr {
  height: 8px;
  background: #c9c9c9;
}
.orders tfoot td {
  font-weight: 700;
  color: #111;
}
.orders tfoot td:last-child {
  padding-right: 8px;
}
.row-x {
  margin-left: 3px;
  color: #888;
}
.terminal-tabs {
  height: 13px;
  display: flex;
  align-items: center;
  padding-left: 2px;
  border-top: 1px solid #999;
  background: #f0f0f0;
  color: #888;
}
.terminal-tabs button {
  height: 7px;
  padding: 0 3px;
  border-right: 1px solid #aaa;
}
.terminal-tabs .active {
  height: 9px;
  padding: 0 5px;
  background: #fff;
  color: #222;
  border: solid #777;
  border-width: 0 1px 1px;
}
.terminal-tabs sub {
  font-size: 4px;
  line-height: 4px;
  color: #f33;
}
.status {
  height: 6px;
  line-height: 6px;
  display: grid;
  grid-template-columns: 193px 47px 42px 26px 28px 27px 28px 24px 1fr;
  color: #222;
}
.status span + span {
  padding-left: 3px;
  border-left: 1px solid #ccc;
}
.status .net {
  display: flex;
  align-items: center;
  gap: 8px;
}
.net-icon {
  width: 10px;
  height: 5px;
}
</style>
